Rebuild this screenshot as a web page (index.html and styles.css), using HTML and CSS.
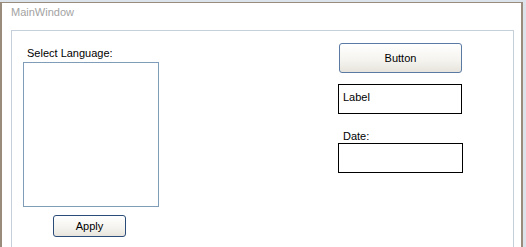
FILE: index.html
```html
<!DOCTYPE html>
<html>
<head>
<meta charset="utf-8">
<link rel="stylesheet" href="styles.css">
</head>
<body>
<div class="window">
  <div class="title">MainWindow</div>
  <div class="group">
    <div class="col-left">
      <div class="caption">Select Language:</div>
      <div class="listbox"></div>
      <button class="btn btn-apply">Apply</button>
    </div>
    <div class="col-right">
      <button class="btn btn-main">Button</button>
      <div class="framed label-box">Label</div>
      <div class="caption date-caption">Date:</div>
      <div class="framed date-box"></div>
    </div>
  </div>
</div>
</body>
</html>
```
FILE: styles.css
```css
html, body {
  margin: 0;
  padding: 0;
  width: 526px;
  height: 247px;
  overflow: hidden;
  background: #dde3ea;
  font-family: "Liberation Sans", Arial, sans-serif;
  font-size: 11px;
  line-height: 13px;
  color: #000;
}
.window {
  margin-top: 2px;
  width: 523px;
  height: 245px;
  box-sizing: border-box;
  border-top: 1px solid #9a8c7c;
  border-left: 2px solid #9a8c7c;
  border-right: 2px solid #9a8c7c;
  background: #fff;
  padding: 3px 7px 0 9px;
  overflow: hidden;
}
.title {
  color: #a3a3a3;
  height: 13px;
  margin-bottom: 11px;
}
.group {
  border: 1px solid #c6d0dc;
  height: 260px;
  box-sizing: border-box;
  display: flex;
}
.col-left {
  padding: 16px 0 0 11px;
  width: 136px;
  display: flex;
  flex-direction: column;
  align-items: flex-start;
}
.caption {
  padding-left: 4px;
  height: 13px;
  white-space: nowrap;
}
.listbox {
  margin-top: 2px;
  width: 136px;
  height: 145px;
  box-sizing: border-box;
  border: 1px solid #7f9db9;
  background: #fff;
}
.btn {
  font-family: inherit;
  font-size: 11px;
  line-height: 13px;
  color: #000;
  padding: 0;
  border-radius: 3px;
  background: linear-gradient(#ffffff, #f4f3ee 60%, #e6e4dc);
  display: flex;
  align-items: center;
  justify-content: center;
  box-sizing: border-box;
}
.btn-apply {
  margin: 8px 0 0 30px;
  width: 73px;
  height: 22px;
  border: 1px solid #2b4c78;
}
.col-right {
  margin-left: 179px;
  padding-top: 12px;
  width: 125px;
  display: flex;
  flex-direction: column;
  align-items: flex-start;
}
.btn-main {
  margin-left: 1px;
  width: 123px;
  height: 30px;
  border: 1px solid #5a7aa4;
}
.framed {
  border: 1px solid #000;
  box-sizing: border-box;
  height: 30px;
  background: #fff;
}
.label-box {
  margin-top: 11px;
  width: 124px;
  padding: 6px 0 0 4px;
}
.date-caption {
  margin-top: 16px;
  padding-left: 5px;
}
.date-box {
  width: 125px;
  height: 30px;
}
```
